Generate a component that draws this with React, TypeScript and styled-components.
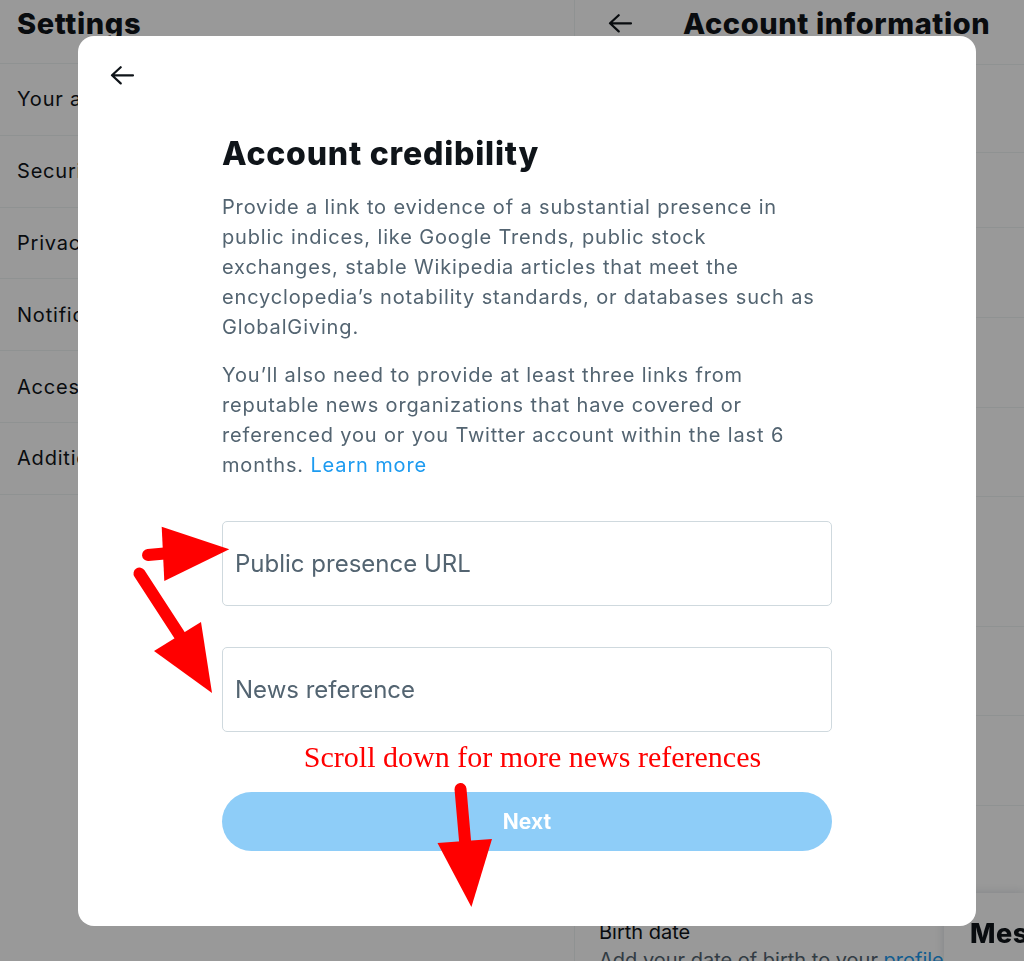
import styled, { createGlobalStyle } from 'styled-components';

const GlobalStyle = createGlobalStyle`
  html, body {
    margin: 0;
    padding: 0;
    background: #ffffff;
  }
  body {
    font-family: Inter, 'Noto Sans', 'Liberation Sans', sans-serif;
    color: #0f1419;
    overflow: hidden;
  }
`;

const settingsItems = [
  'Your account',
  'Security and account access',
  'Privacy and safety',
  'Notifications',
  'Accessibility, display, and languages',
  'Additional resources',
];

// row heights of the account information list, the borders come on top
const detailRows = [87, 74, 89, 89, 88, 129, 88, 89, 87];

const Page = styled.div`
  display: flex;
  width: 1024px;
  height: 961px;
  overflow: hidden;
`;

const SettingsColumn = styled.section`
  width: 574px;
  flex-shrink: 0;
  border-right: 1px solid #eff3f4;
`;

const ColumnHeader = styled.header<{ height: number; inset: number }>`
  display: flex;
  align-items: flex-start;
  gap: 51px;
  height: ${({ height }) => height}px;
  flex-shrink: 0;
  padding: 8px 0 0 ${({ inset }) => inset}px;
  box-sizing: border-box;
  border-bottom: 1px solid #eff3f4;
`;

const HeaderTitle = styled.h2`
  margin: 0;
  font-size: 29px;
  line-height: 32px;
  font-weight: 800;
  letter-spacing: 0.6px;
  color: #0f1419;
  white-space: nowrap;
`;

const MenuRow = styled.div`
  display: flex;
  align-items: center;
  height: 70.8px;
  padding-left: 17px;
  border-bottom: 1px solid #eff3f4;
  font-size: 20px;
  letter-spacing: 0.8px;
  color: #0f1419;
  white-space: nowrap;
`;

const DetailColumn = styled.section`
  flex: 1;
  display: flex;
  flex-direction: column;
  min-width: 0;
`;

const DetailRow = styled.div<{ height: number }>`
  height: ${({ height }) => height}px;
  flex-shrink: 0;
  border-bottom: 1px solid #eff3f4;
`;

const BirthRow = styled.div`
  padding: 24px 0 0 24px;
  font-size: 20px;
  line-height: 28px;
  white-space: nowrap;
`;

const BirthHint = styled.div`
  color: #536471;
`;

const BlueText = styled.a`
  color: #1d9bf0;
  text-decoration: none;
  cursor: pointer;
`;

const MessagesDrawer = styled.aside`
  position: fixed;
  left: 944px;
  top: 893px;
  right: 0;
  bottom: 0;
  padding: 25px 0 0 26px;
  background: #ffffff;
  box-shadow: 0 0 10px rgba(101, 119, 134, 0.25);
  border-radius: 16px 0 0 0;
  font-size: 27px;
  line-height: 32px;
  font-weight: 800;
  letter-spacing: 0.5px;
  white-space: nowrap;
  overflow: hidden;
`;

const Overlay = styled.div`
  position: fixed;
  inset: 0;
  display: flex;
  align-items: center;
  padding-left: 78px;
  background: rgba(0, 0, 0, 0.4);
`;

const ModalCard = styled.div`
  width: 898px;
  height: 890px;
  background: #ffffff;
  border-radius: 16px;
  display: flex;
  flex-direction: column;
`;

const ModalHeader = styled.div`
  padding: 29px 0 0 32px;
  height: 20px;
`;

const BackButton = styled.button<{ lift?: number }>`
  display: block;
  padding: 0;
  margin-top: ${({ lift = 0 }) => lift}px;
  border: 0;
  background: none;
  color: #0f1419;
  cursor: pointer;
`;

const ModalBody = styled.div`
  width: 610px;
  margin: 51px auto 0;
  display: flex;
  flex-direction: column;
`;

const Title = styled.h1`
  margin: 0;
  font-size: 32px;
  line-height: 36px;
  font-weight: 800;
  letter-spacing: 0.8px;
  color: #0f1419;
`;

const Text = styled.p<{ gap: number }>`
  max-width: 604px;
  margin: ${({ gap }) => gap}px 0 0;
  font-size: 20px;
  line-height: 30px;
  letter-spacing: 0.85px;
  color: #536471;
`;

const Field = styled.label<{ gap: number }>`
  display: flex;
  align-items: center;
  height: 85px;
  margin-top: ${({ gap }) => gap}px;
  padding: 0 12px;
  box-sizing: border-box;
  border: 1px solid #cfd9de;
  border-radius: 5px;
`;

const FieldInput = styled.input`
  flex: 1;
  border: 0;
  outline: none;
  padding: 0;
  background: transparent;
  font-family: Inter, 'Noto Sans', sans-serif;
  font-size: 24px;
  color: #0f1419;

  &::placeholder {
    color: #536471;
    opacity: 1;
  }
`;

const ScrollNote = styled.div`
  margin-top: 9px;
  padding-left: 11px;
  text-align: center;
  font-family: 'Liberation Serif', 'Times New Roman', serif;
  font-size: 30px;
  line-height: 32px;
  color: #ff0000;
`;

const NextButton = styled.button`
  height: 59px;
  margin-top: 19px;
  padding-top: 2px;
  border: 0;
  border-radius: 999px;
  background: #8ecdf8;
  color: #ffffff;
  font-family: Inter, 'Noto Sans', sans-serif;
  font-size: 21px;
  font-weight: 700;
`;

const Annotations = styled.svg`
  position: absolute;
  top: 0;
  left: 0;
  width: 100%;
  height: 100%;
  pointer-events: none;
`;

const ArrowLeft = ({ size = 24 }: { size?: number }) => (
  <svg width={size} height={(size * 20) / 24} viewBox='0 0 24 20' fill='none'>
    <path
      d='M10.7 2.2 L2 10.3 L10.7 18.4 M2 10.3 H23'
      stroke='currentColor'
      strokeWidth='2.2'
      strokeLinecap='round'
      strokeLinejoin='round'
    />
  </svg>
);

const RedArrows = () => (
  <Annotations viewBox='0 0 1024 961'>
    <g fill='#ff0000' stroke='#ff0000' strokeLinecap='round'>
      <line x1='148' y1='555' x2='170' y2='553' strokeWidth='12' />
      <polygon points='161.7,526.7 229.3,549.3 164.3,581' stroke='none' />
      <line x1='139.5' y1='573.5' x2='184' y2='642' strokeWidth='12' />
      <polygon points='154,651 201,622 212,693' stroke='none' />
      <line x1='460.5' y1='789' x2='465.5' y2='846' strokeWidth='12' />
      <polygon points='437.5,843 492,839 471.4,907' stroke='none' />
    </g>
  </Annotations>
);

export default function App() {
  return (
    <>
      <GlobalStyle />
      <Page>
        <SettingsColumn>
          <ColumnHeader height={64} inset={17}>
            <HeaderTitle>Settings</HeaderTitle>
          </ColumnHeader>
          {settingsItems.map((item) => (
            <MenuRow key={item}>{item}</MenuRow>
          ))}
        </SettingsColumn>
        <DetailColumn>
          <ColumnHeader height={65} inset={33}>
            <BackButton aria-label='Back' lift={5}>
              <ArrowLeft />
            </BackButton>
            <HeaderTitle>Account information</HeaderTitle>
          </ColumnHeader>
          {detailRows.map((h, i) => (
            <DetailRow key={i} height={h} />
          ))}
          <BirthRow>
            <div>Birth date</div>
            <BirthHint>
              Add your date of birth to your <BlueText>profile</BlueText>.
            </BirthHint>
          </BirthRow>
        </DetailColumn>
        <MessagesDrawer>Messages</MessagesDrawer>
      </Page>

      <Overlay>
        <ModalCard role='dialog'>
          <ModalHeader>
            <BackButton aria-label='Back'>
              <ArrowLeft />
            </BackButton>
          </ModalHeader>
          <ModalBody>
            <Title>Account credibility</Title>
            <Text gap={20}>
              Provide a link to evidence of a substantial presence in public indices, like Google Trends, public stock
              exchanges, stable Wikipedia articles that meet the encyclopedia’s notability standards, or databases
              such as GlobalGiving.
            </Text>
            <Text gap={18}>
              You’ll also need to provide at least three links from reputable news organizations that have covered or
              referenced you or you Twitter account within the last 6 months. <BlueText>Learn more</BlueText>
            </Text>
            <Field gap={41}>
              <FieldInput placeholder='Public presence URL' />
            </Field>
            <Field gap={41}>
              <FieldInput placeholder='News reference' />
            </Field>
            <ScrollNote>Scroll down for more news references</ScrollNote>
            <NextButton disabled>Next</NextButton>
          </ModalBody>
        </ModalCard>
        <RedArrows />
      </Overlay>
    </>
  );
}
